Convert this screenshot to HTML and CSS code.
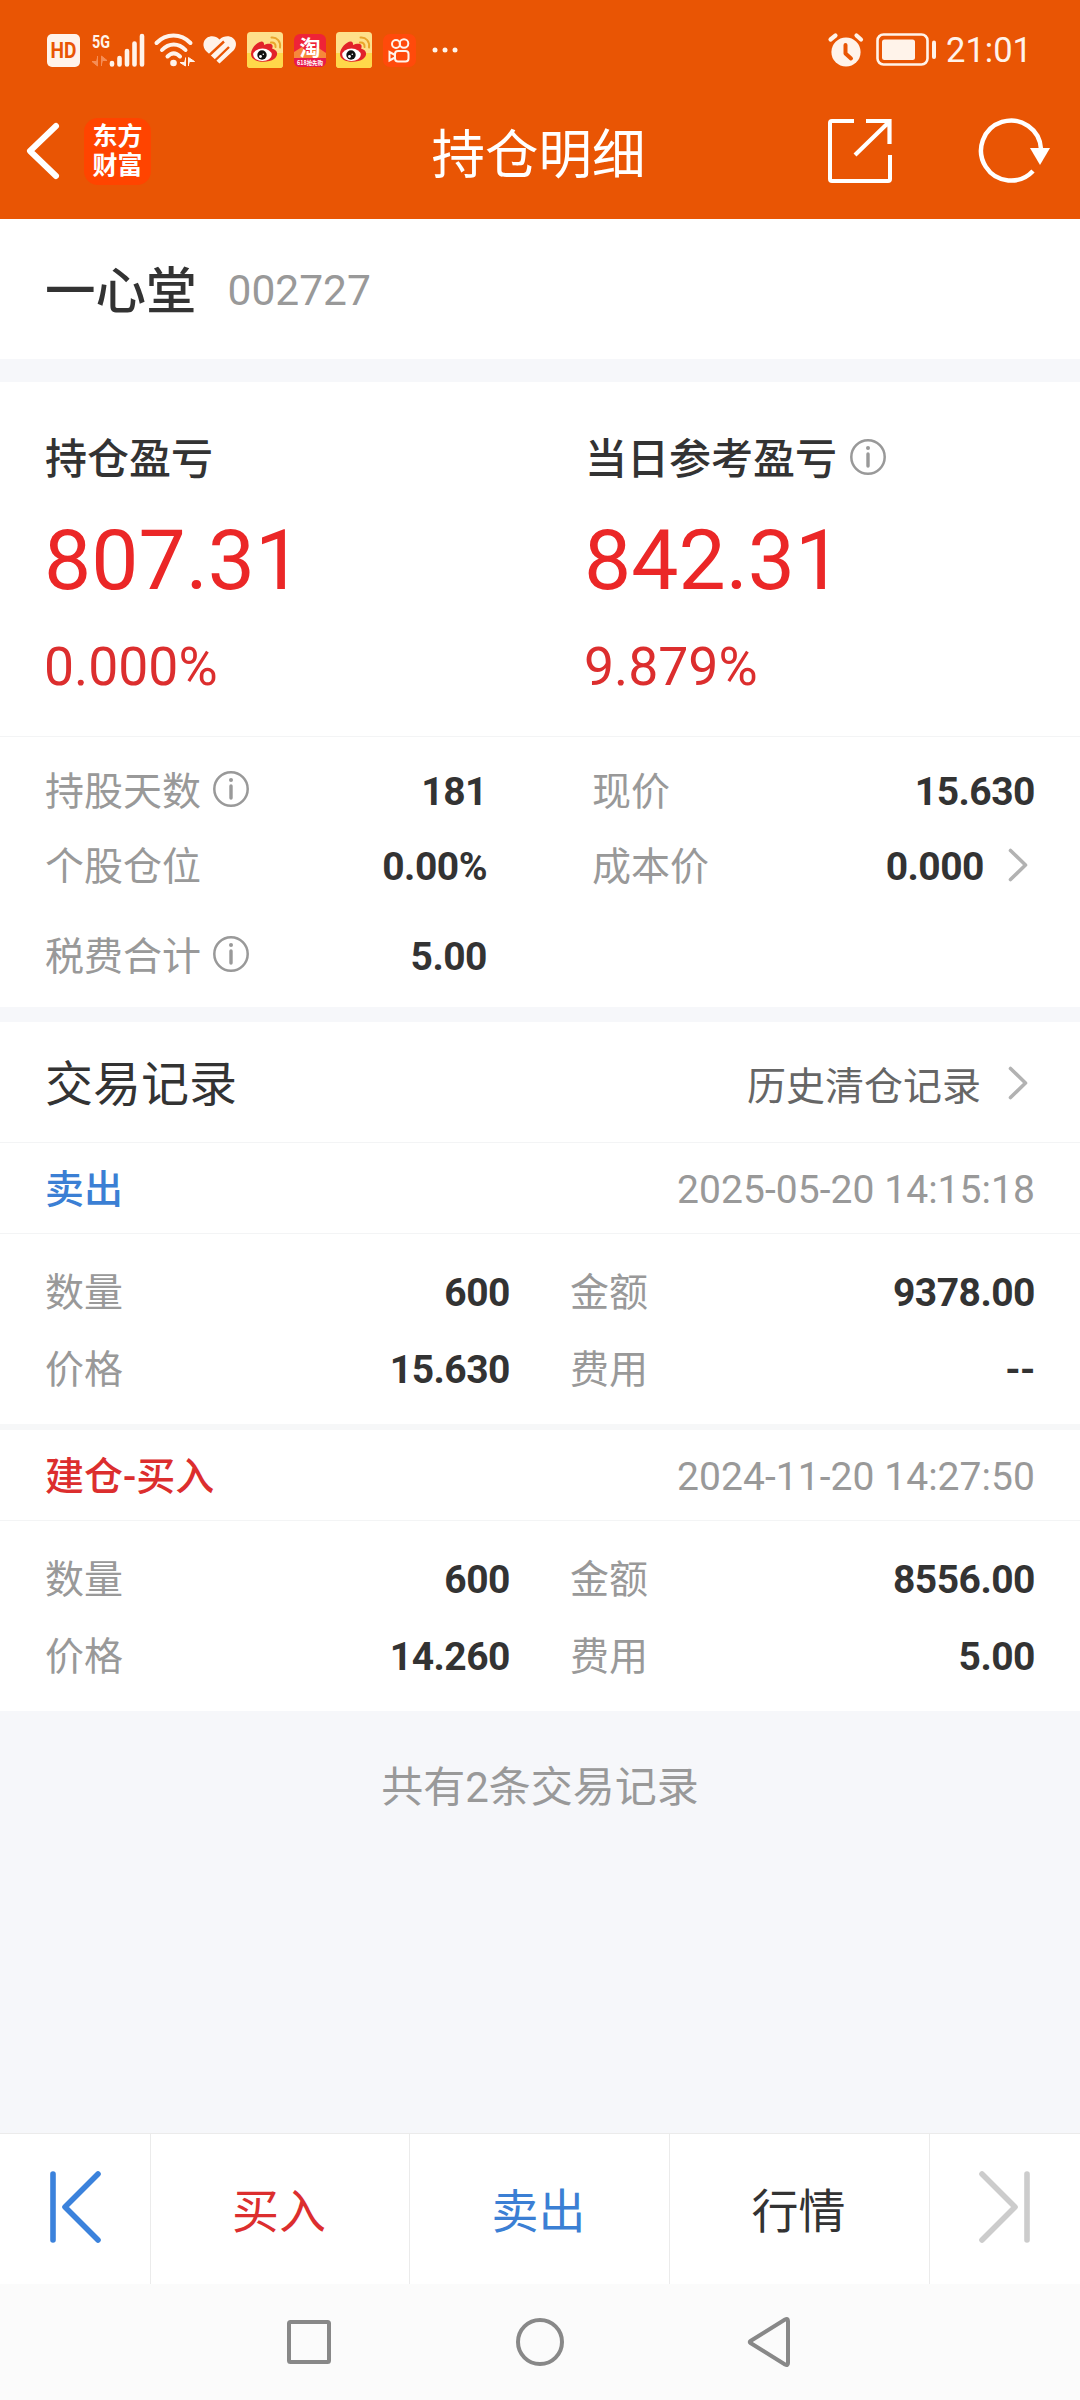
FILE: index.html
```html
<!DOCTYPE html>
<html lang="zh-CN">
<head>
    <meta charset="UTF-8">
    <meta name="viewport" content="width=device-width, initial-scale=1.0">
    <title>持仓明细</title>
    <link rel="stylesheet" href="styles.css">
</head>
<body>
    <!-- shared icons -->
    <svg class="defs" width="0" height="0">
        <symbol id="info" viewBox="0 0 36 36">
            <circle cx="18" cy="18" r="16.7" fill="none" stroke="#999" stroke-width="2.5"/>
            <circle cx="18" cy="9" r="2" fill="#999"/>
            <path d="M18 15V27" stroke="#999" stroke-width="3.4" stroke-linecap="round"/>
        </symbol>
        <symbol id="arrow" viewBox="0 0 20 34">
            <path d="M2.5 2.5L17.5 17L2.5 31.5" fill="none" stroke="#b2b2b2" stroke-width="3.6" stroke-linecap="round" stroke-linejoin="round"/>
        </symbol>
        <symbol id="weibo" viewBox="0 0 36 36">
            <rect width="36" height="36" rx="3.5" fill="#fee08b"/>
            <path d="M0 21H36V32.5A3.5 3.5 0 0 1 32.5 36H3.5A3.5 3.5 0 0 1 0 32.5Z" fill="#ffd84a"/>
            <path d="M4 22C4 16 11 9 15 9.5C17.5 9.8 17 13 17 13C20 11.5 25 11 25.5 13.5C26 15.5 25 16.5 25 16.5C32 18.5 31 24 27 27C21 31.5 4 31 4 22Z" fill="#e2222a"/>
            <ellipse cx="15.5" cy="22.8" rx="9.3" ry="6.2" fill="#fff"/>
            <circle cx="15" cy="23" r="4.7" fill="#111"/>
            <circle cx="13.5" cy="24.5" r="1.4" fill="#fff"/>
            <circle cx="16.3" cy="22.3" r=".8" fill="#fff"/>
            <path d="M24 10.5C27 10 29 12 28.5 15M24.5 5.5C30 5 34 9.5 33 15.5" fill="none" stroke="#e9a52b" stroke-width="2" stroke-linecap="round"/>
        </symbol>
    </svg>

    <div class="status">
        <div class="status-left">
            <svg class="hd" width="33" height="33" viewBox="0 0 33 33">
                <rect width="33" height="33" rx="5" fill="#fff3ea"/>
                <text x="16.5" y="24" text-anchor="middle" textLength="26" lengthAdjust="spacingAndGlyphs" class="t-hd">HD</text>
            </svg>
            <svg class="signal" width="54" height="34" viewBox="0 0 54 34">
                <text x="0" y="14.5" textLength="18" lengthAdjust="spacingAndGlyphs" class="t-5g">5G</text>
                <path d="M5.5 23V33L0 28.5H4M9.5 33V23L15 27.5H11" fill="#f58d55" stroke="#f58d55" stroke-width="1"/>
                <path d="M20 30V31.5M27.5 25V31.5M35 18V31.5M42.5 10.5V31.5M50 3V31.5" stroke="#fff3ea" stroke-width="4.6" stroke-linecap="round"/>
            </svg>
            <svg class="wifi" width="42" height="34" viewBox="0 0 42 34">
                <path d="M2.5 10C12 0 27 0 36.5 10M8 17C15 9.5 24.5 9.5 31.5 17M13.5 23.5C17.5 19.5 22 19.5 26 23.5" fill="none" stroke="#fff3ea" stroke-width="4" stroke-linecap="round"/>
                <circle cx="19.5" cy="30" r="3.3" fill="#fff3ea"/>
                <path d="M31.5 24.5V33L26 29.5H30M34.5 33V24.5L40.5 28.5H36" fill="#fff3ea" stroke="#fff3ea"/>
            </svg>
            <svg class="heart" width="34" height="28" viewBox="0 0 34 28">
                <path d="M16.5 27.5L3 15C-1 10.500 0 4.500 4 1.800C8-.8 13 0 16.500 3.500C20 0 26-.8 29.500 1.800C34 5 34 10.500 30.500 14.500Z" fill="#fff3ea"/>
                <path d="M6.500 19L21 5.500M12 24.500L26 11" stroke="#e95504" stroke-width="2.400"/>
            </svg>
            <svg class="app" width="36" height="36"><use href="#weibo"/></svg>
            <svg class="taobao" width="32" height="33" viewBox="0 0 32 33">
                <rect width="32" height="33" rx="6" fill="#ef2337"/>
                <path d="M0 18L8 13L14 20L23 13L32 19V26H0Z" fill="#f7883b"/>
                <path d="M0 24H32V27A6 6 0 0 1 26 33H6A6 6 0 0 1 0 27Z" fill="#e91a4c"/>
                <text x="16" y="21" text-anchor="middle" class="t-tao">淘</text>
                <text x="16" y="30.5" text-anchor="middle" textLength="26" lengthAdjust="spacingAndGlyphs" class="t-618">618抢先购</text>
            </svg>
            <svg class="app" width="36" height="36"><use href="#weibo"/></svg>
            <svg class="kuaishou" width="33" height="33" viewBox="0 0 33 33">
                <rect width="33" height="33" rx="7" fill="#ff4a0b"/>
                <g fill="none" stroke="#fff3ea" stroke-width="2">
                    <circle cx="13" cy="10" r="4"/>
                    <circle cx="21" cy="9.5" r="4.3"/>
                    <rect x="12" y="17" width="13.5" height="10.5" rx="3"/>
                    <path d="M12 21L6.5 18V26.5L12 23.5"/>
                </g>
            </svg>
            <svg width="26" height="6" viewBox="0 0 26 6"><g fill="#fff3ea"><circle cx="3" cy="3" r="2.5"/><circle cx="13" cy="3" r="2.5"/><circle cx="23" cy="3" r="2.5"/></g></svg>
        </div>
        <div class="status-right">
            <svg width="36" height="34" viewBox="0 0 36 34">
                <circle cx="18" cy="19" r="14.6" fill="#fff3ea"/>
                <path d="M2.5 6.5L7.5 2.5M28.5 2.5L33 6.5" stroke="#fff3ea" stroke-width="4.2" stroke-linecap="round"/>
                <path d="M17.5 12V20.5L23 25.5" fill="none" stroke="#e95504" stroke-width="4" stroke-linecap="round" stroke-linejoin="round"/>
            </svg>
            <svg class="battery" width="60" height="34" viewBox="0 0 60 34">
                <rect x="1.5" y="1.5" width="50" height="30" rx="6" fill="none" stroke="#fff3ea" stroke-width="2.6"/>
                <rect x="6" y="6.5" width="33" height="20.5" rx="2.5" fill="#fff3ea"/>
                <path d="M58 9.5V24" stroke="#fff3ea" stroke-width="4" stroke-linecap="round"/>
            </svg>
            <span class="clock">21:01</span>
        </div>
    </div>

    <div class="header">
        <div class="header-side">
            <svg class="back" width="34" height="56" viewBox="0 0 34 56">
                <path d="M30 3L4 28L30 53" fill="none" stroke="#fff" stroke-width="6" stroke-linecap="round" stroke-linejoin="round"/>
            </svg>
            <div class="logo"><span>东方</span><span>财富</span></div>
        </div>
        <h1>持仓明细</h1>
        <div class="header-side right">
            <svg width="64" height="64" viewBox="0 0 64 64">
                <path d="M26 2H4Q2 2 2 4V60Q2 62 4 62H60Q62 62 62 60V36" fill="none" stroke="#fff" stroke-width="4"/>
                <path d="M38 2H61.5V25M61 3L27 36" fill="none" stroke="#fff" stroke-width="4.2"/>
            </svg>
            <svg class="refresh" width="72" height="64" viewBox="0 0 72 64">
                <path d="M54 52A30 30 0 1 1 62 30" fill="none" stroke="#fff" stroke-width="4.5"/>
                <path d="M51 29H71L61 46Z" fill="#fff"/>
            </svg>
        </div>
    </div>

    <div class="stock">
        <span class="stock-name">一心堂</span>
        <span class="stock-code">002727</span>
    </div>

    <div class="profit">
        <div class="profit-item">
            <div class="profit-label">持仓盈亏</div>
            <div class="profit-value">807.31</div>
            <div class="profit-rate">0.000%</div>
        </div>
        <div class="profit-item">
            <div class="profit-label">当日参考盈亏 <svg class="info" width="36" height="36"><use href="#info"/></svg></div>
            <div class="profit-value">842.31</div>
            <div class="profit-rate">9.879%</div>
        </div>
    </div>

    <div class="detail">
        <div class="cell"><span class="label">持股天数</span><svg class="info" width="36" height="36"><use href="#info"/></svg><b>181</b></div>
        <div class="cell"><span class="label">现价</span><b>15.630</b></div>
        <div class="cell"><span class="label">个股仓位</span><b>0.00%</b></div>
        <div class="cell"><span class="label">成本价</span><b>0.000</b><svg class="arrow" width="20" height="34"><use href="#arrow"/></svg></div>
        <div class="cell"><span class="label">税费合计</span><svg class="info" width="36" height="36"><use href="#info"/></svg><b>5.00</b></div>
    </div>

    <div class="records">
        <div class="records-head">
            <h2>交易记录</h2>
            <span class="history">历史清仓记录</span>
            <svg class="arrow" width="20" height="34"><use href="#arrow"/></svg>
        </div>

        <div class="record">
            <div class="record-head"><span class="type sell">卖出</span><span class="time">2025-05-20 14:15:18</span></div>
            <div class="record-body">
                <div class="cell"><span class="label">数量</span><b>600</b></div>
                <div class="cell"><span class="label">金额</span><b>9378.00</b></div>
                <div class="cell"><span class="label">价格</span><b>15.630</b></div>
                <div class="cell"><span class="label">费用</span><b>--</b></div>
            </div>
        </div>

        <div class="record">
            <div class="record-head"><span class="type buy">建仓-买入</span><span class="time">2024-11-20 14:27:50</span></div>
            <div class="record-body">
                <div class="cell"><span class="label">数量</span><b>600</b></div>
                <div class="cell"><span class="label">金额</span><b>8556.00</b></div>
                <div class="cell"><span class="label">价格</span><b>14.260</b></div>
                <div class="cell"><span class="label">费用</span><b>5.00</b></div>
            </div>
        </div>
    </div>

    <div class="total">共有2条交易记录</div>

    <div class="actions">
        <div class="action step">
            <svg width="52" height="72" viewBox="0 0 52 72">
                <path d="M4 3V69M49 3L16 36L49 69" fill="none" stroke="#3b82dc" stroke-width="5.6" stroke-linecap="round" stroke-linejoin="round"/>
            </svg>
        </div>
        <div class="action buy">买入</div>
        <div class="action sell">卖出</div>
        <div class="action">行情</div>
        <div class="action step">
            <svg width="52" height="72" viewBox="0 0 52 72">
                <path d="M48 3V69M3 3L36 36L3 69" fill="none" stroke="#ccc" stroke-width="5.6" stroke-linecap="round" stroke-linejoin="round"/>
            </svg>
        </div>
    </div>

    <div class="navbar">
        <svg width="50" height="50" viewBox="0 0 50 50"><rect x="5" y="5" width="40" height="40" rx="1.5" fill="none" stroke="#888" stroke-width="4"/></svg>
        <svg width="50" height="50" viewBox="0 0 50 50"><circle cx="25" cy="25" r="22" fill="none" stroke="#888" stroke-width="4"/></svg>
        <svg width="50" height="50" viewBox="0 0 50 50"><path d="M4.5 24Q3 25 4.5 26L39 47.5Q42 49 42 46V4Q42 1 39 2.5Z" fill="none" stroke="#888" stroke-width="4"/></svg>
    </div>
</body>
</html>
```
FILE: styles.css
```css
* {
    box-sizing: border-box;
}

body {
    margin: 0;
    height: 2400px;
    display: flex;
    flex-direction: column;
    font-family: Roboto, "Noto Sans CJK SC", sans-serif;
    font-size: 39px;
    line-height: 1;
    color: #333;
    background-color: #f6f7fa;
}

svg {
    display: block;
    flex: none;
    overflow: visible;
}

.defs {
    position: absolute;
}

h1, h2 {
    margin: 0;
    font-weight: 400;
}

/* status bar */
.status {
    height: 100px;
    padding: 0 48px 0 47px;
    display: flex;
    justify-content: space-between;
    background-color: #e95504;
    color: #fff3ea;
}

.status-left, .status-right {
    display: flex;
    align-items: center;
    height: 100px;
}

.signal { margin-left: 12px; }
.wifi { margin-left: 8px; }
.heart { margin-left: 7px; }
.app { margin-left: 10px; }
.taobao { margin-left: 11px; }
.kuaishou { margin: 0 16px 0 11px; }
.battery { margin: 0 10px 0 12px; }

.clock {
    font-size: 34.5px;
}

.t-hd {
    font: bold 22px Roboto, sans-serif;
    fill: #e95504;
}

.t-5g {
    font: bold 18px Roboto, sans-serif;
    fill: #fff3ea;
}

.t-tao {
    font: bold 21px "Noto Sans CJK SC", sans-serif;
    fill: #fff;
}

.t-618 {
    font: bold 6px "Noto Sans CJK SC", sans-serif;
    fill: #fff;
}

/* title bar */
.header {
    height: 119px;
    padding: 0 29px 17px 26px;
    display: flex;
    align-items: center;
    justify-content: space-between;
    background-color: #e95504;
    color: #fff;
}

.header h1 {
    font-size: 53.5px;
    padding-top: 9px;
}

.header-side {
    width: 330px;
    display: flex;
    align-items: center;
}

.header-side.right {
    justify-content: flex-end;
}

.logo {
    width: 67px;
    height: 67px;
    margin-left: 24px;
    display: flex;
    flex-direction: column;
    align-items: center;
    justify-content: center;
    gap: 4px;
    border-radius: 14px;
    background-color: #ff4400;
    font-size: 25px;
    font-weight: 700;
}

.refresh {
    margin-left: 87px;
}

/* stock name */
.stock {
    height: 140px;
    padding: 4px 0 0 45px;
    display: flex;
    align-items: center;
    background-color: #fff;
}

.stock-name {
    padding-top: 2px;
    font-size: 50.5px;
    font-weight: 500;
}

.stock-code {
    margin-left: 31px;
    font-size: 42.5px;
    color: #999;
}

/* profit */
.profit {
    margin-top: 23px;
    height: 355px;
    padding: 54px 0 0 45px;
    display: flex;
    background-color: #fff;
    border-bottom: 1px solid #f3f4f5;
}

.profit-item {
    flex: none;
    width: 540px;
}

.profit-label {
    height: 48px;
    display: flex;
    align-items: center;
    gap: 13px;
    font-size: 42px;
    font-weight: 500;
}

.profit-label .info {
    margin-bottom: 7px;
}

.profit-value {
    margin: 37px 0 0 -1px;
    font-size: 84px;
    line-height: 80px;
    color: #eb2727;
}

.profit-rate {
    margin: 39px 0 0 -1px;
    font-size: 53.5px;
    line-height: 54px;
    color: #dc2e2e;
}

/* position details */
.detail {
    height: 270px;
    padding: 16px 45px 0;
    display: grid;
    grid-template-columns: 442px 443px;
    grid-template-rows: 75px 75px 105px;
    justify-content: space-between;
    background-color: #fff;
}

.cell {
    padding-top: 4px;
    display: flex;
    align-items: center;
}

.cell b {
    margin-left: auto;
    font-weight: 700;
    letter-spacing: -.5px;
}

.label {
    color: #999;
}

.cell .info {
    margin: 0 0 7px 12px;
}

.arrow {
    margin: 0 7px 0 24px;
}

.cell .arrow {
    margin-bottom: 6px;
}

/* trade records */
.records {
    margin-top: 15px;
    background-color: #fff;
}

.records-head {
    height: 121px;
    padding: 2px 45px 0;
    display: flex;
    align-items: center;
    border-bottom: 1px solid #f3f4f5;
}

.records-head h2 {
    padding-top: 3px;
    font-size: 48px;
}

.history {
    margin-left: auto;
    padding-top: 8px;
    color: #666;
}

.history + .arrow {
    margin-left: 27px;
}

.record + .record {
    border-top: 6px solid #f6f7f8;
}

.record-head {
    height: 91px;
    padding: 4px 45px 0;
    display: flex;
    align-items: center;
    justify-content: space-between;
    border-bottom: 1px solid #f3f4f5;
}

.type {
    font-weight: 500;
}

.time {
    color: #999;
    letter-spacing: .05px;
}

.record-body {
    height: 190px;
    padding: 19px 45px 0;
    display: grid;
    grid-template-columns: 465px 465px;
    grid-template-rows: 77px 77px;
    justify-content: space-between;
    align-content: start;
}

.buy {
    color: #dc2e2e;
}

.sell {
    color: #3b7fd4;
}

.total {
    padding-top: 56px;
    font-size: 42px;
    text-align: center;
    color: #999;
}

/* bottom buttons */
.actions {
    margin-top: auto;
    height: 151px;
    display: grid;
    grid-template-columns: 151px 259px 260px 260px 150px;
    background-color: #fff;
    border-top: 1px solid #ebebeb;
    font-size: 47px;
}

.action {
    padding: 5px 2px 0 0;
    display: flex;
    align-items: center;
    justify-content: center;
    border-right: 1px solid #ebebeb;
}

.action.step {
    padding: 0 0 4px;
}

.action:last-child {
    border-right: 0;
}

.navbar {
    height: 116px;
    display: flex;
    align-items: center;
    justify-content: center;
    gap: 181px;
    background-color: #fbfbfb;
}
```
